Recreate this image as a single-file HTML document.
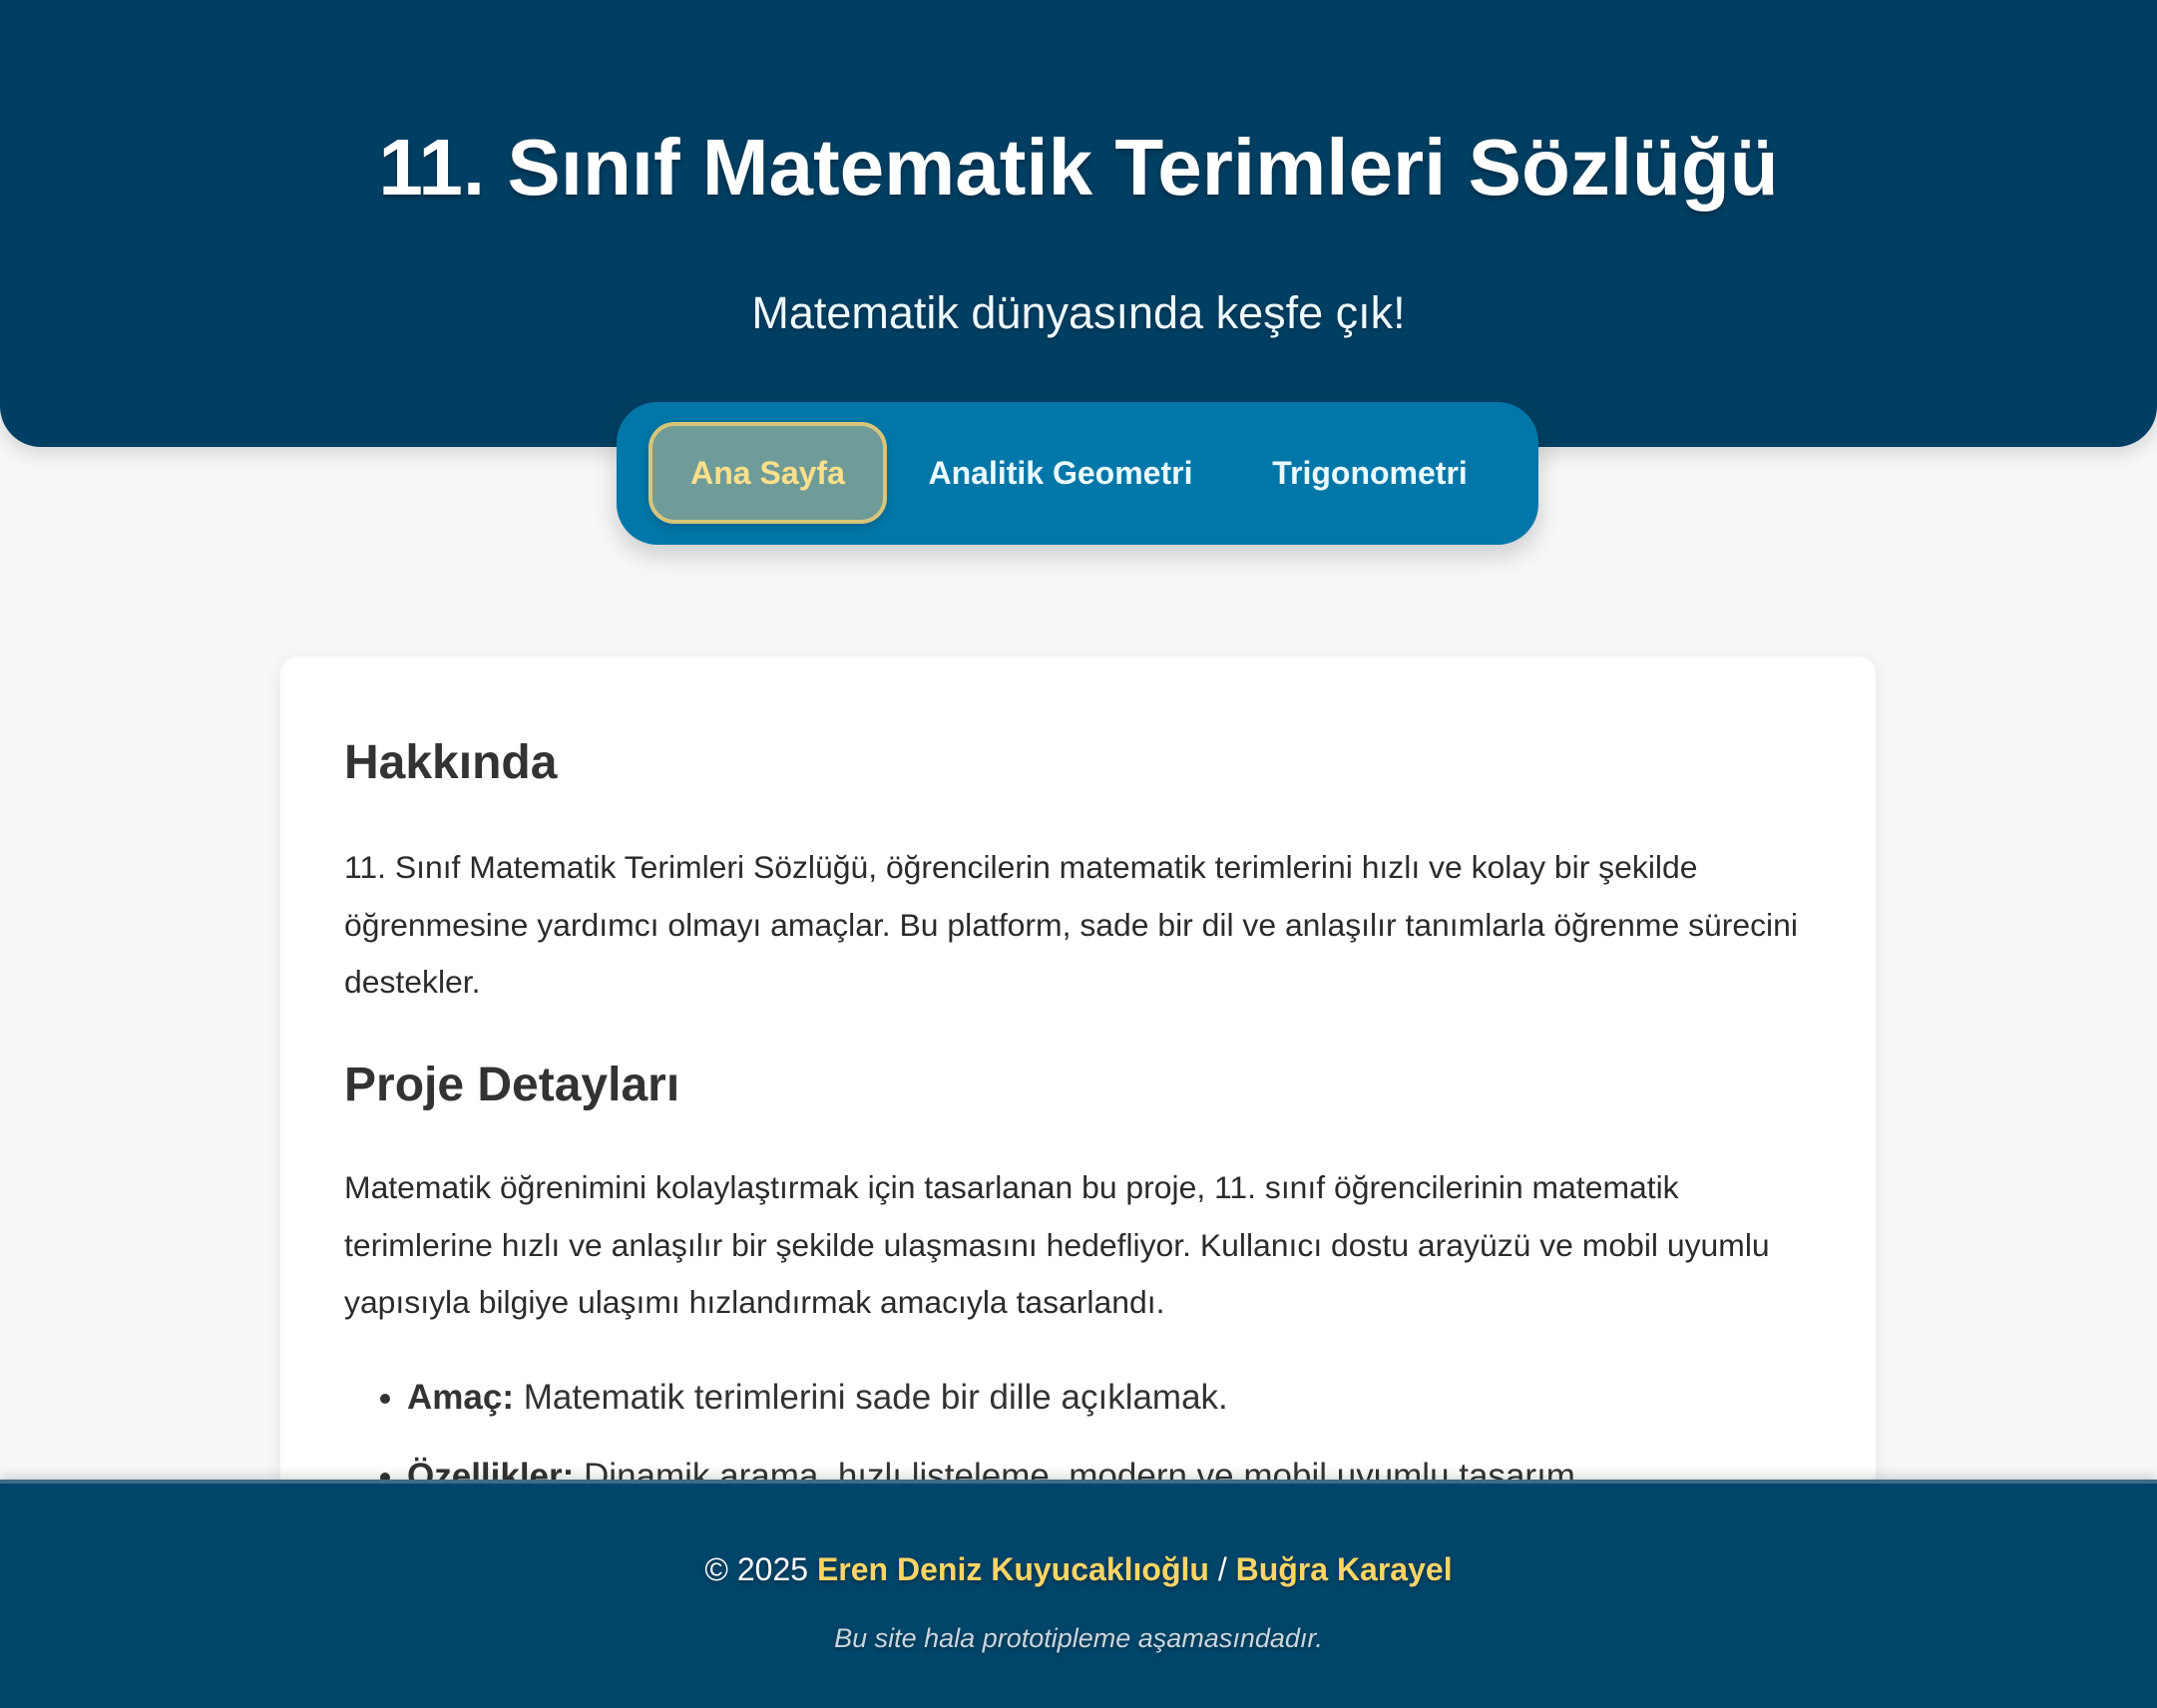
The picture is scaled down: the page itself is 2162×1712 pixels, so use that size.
<!DOCTYPE html>
<html><head><meta charset="utf-8"><style>
*{margin:0;padding:0;box-sizing:border-box}
html,body{width:2162px;height:1712px;overflow:hidden}
body{background:#f6f7f9;font-family:"Liberation Sans",Arial,sans-serif;position:relative}
header{position:absolute;left:0;top:0;width:2162px;height:448px;background:#003f63;border-radius:0 0 41px 41px;text-align:center;color:#fff;box-shadow:0 6px 20px rgba(0,0,0,.15)}
h1{position:absolute;left:0;right:0;top:118px;font-size:80px;font-weight:bold;line-height:100px;text-shadow:0 3px 6px rgba(0,0,0,.3)}
.sub{position:absolute;left:0;right:0;top:289px;font-size:45px;line-height:50px;color:#eefaff;text-shadow:0 2px 4px rgba(0,0,0,.3)}
nav{position:absolute;left:618px;top:403px;width:924px;height:143px;background:#0077a8;border-radius:41px;box-shadow:0 10px 25px rgba(0,0,0,.18)}
nav a{position:absolute;top:20px;height:102px;line-height:102px;font-size:32px;font-weight:bold;color:#eafaff;text-align:center}
nav a.act{left:32px;width:239px;background:#6f9c98;border:4px solid #d8c57a;border-radius:26px;color:#ffe08a;line-height:94px;box-shadow:0 4px 10px rgba(0,0,0,.15)}
.card{position:absolute;left:281px;top:658px;width:1599px;height:1100px;background:#fff;border-radius:17px;box-shadow:0 4px 18px rgba(0,0,0,.07);padding:0 64px;color:#333}
h2{position:absolute;left:64px;font-size:48px;font-weight:bold;line-height:56px}
p{position:absolute;left:64px;width:1480px;font-size:31.9px;line-height:57.5px;color:#2b2b2b}
ul{position:absolute;left:127px;list-style:disc;font-size:35px;color:#333}
ul li{height:79px;line-height:40px}
footer{position:absolute;left:0;top:1483px;width:2162px;height:229px;background:#00466a;border-top:4px solid #3f6b86;text-align:center;box-shadow:0 -4px 10px rgba(0,0,0,.15)}
.f1{position:absolute;left:0;right:0;top:68px;font-size:32px;color:#fff;text-shadow:0 2px 4px rgba(0,0,0,.4)}
.f1 b{color:#ffd565}
.f2{position:absolute;left:0;right:0;top:140px;font-size:27px;font-style:italic;color:#c9d6de;text-shadow:0 2px 4px rgba(0,0,0,.4)}
</style></head><body>
<header><h1>11. Sınıf Matematik Terimleri Sözlüğü</h1><div class="sub">Matematik dünyasında keşfe çık!</div></header>
<nav><a class="act">Ana Sayfa</a><a style="left:295px;width:300px">Analitik Geometri</a><a style="left:635px;width:240px">Trigonometri</a></nav>
<div class="card">
<h2 style="top:79px">Hakkında</h2>
<p style="top:183px">11. Sınıf Matematik Terimleri Sözlüğü, öğrencilerin matematik terimlerini hızlı ve kolay bir şekilde öğrenmesine yardımcı olmayı amaçlar. Bu platform, sade bir dil ve anlaşılır tanımlarla öğrenme sürecini destekler.</p>
<h2 style="top:402px">Proje Detayları</h2>
<p style="top:504px">Matematik öğrenimini kolaylaştırmak için tasarlanan bu proje, 11. sınıf öğrencilerinin matematik terimlerine hızlı ve anlaşılır bir şekilde ulaşmasını hedefliyor. Kullanıcı dostu arayüzü ve mobil uyumlu yapısıyla bilgiye ulaşımı hızlandırmak amacıyla tasarlandı.</p>
<ul style="top:723px"><li><b>Amaç:</b> Matematik terimlerini sade bir dille açıklamak.</li><li><b>Özellikler:</b> Dinamik arama, hızlı listeleme, modern ve mobil uyumlu tasarım.</li></ul>
</div>
<footer><div class="f1">© 2025 <b>Eren Deniz Kuyucaklıoğlu</b> / <b>Buğra Karayel</b></div><div class="f2">Bu site hala prototipleme aşamasındadır.</div></footer>
</body></html>
